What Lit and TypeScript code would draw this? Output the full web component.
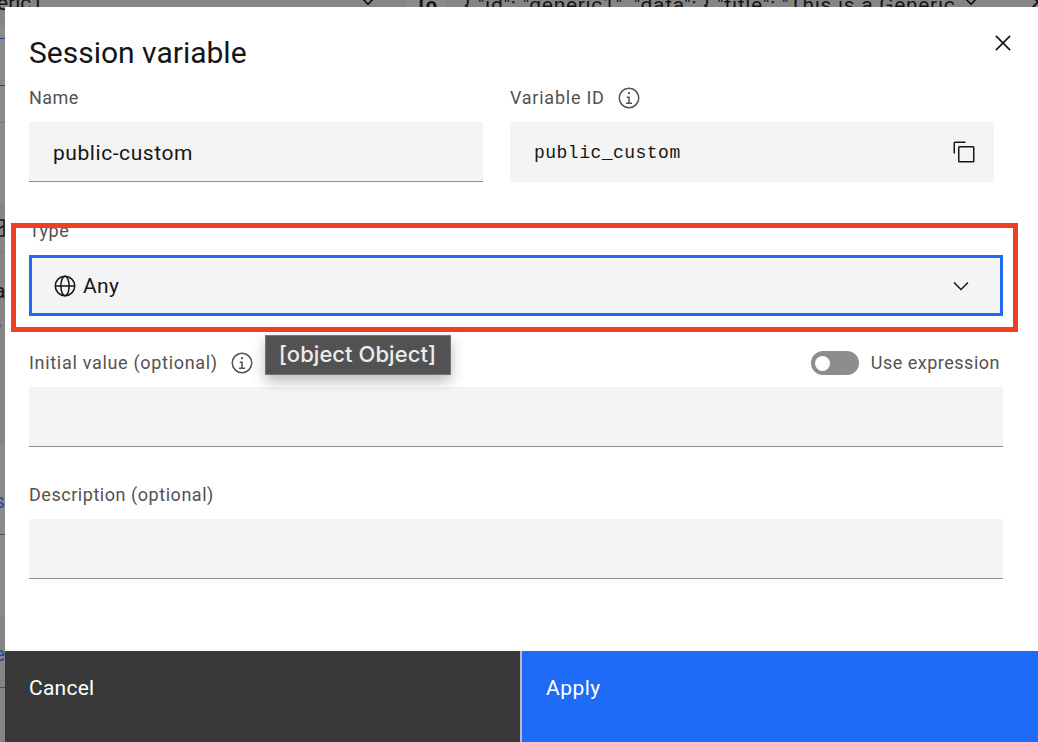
import { LitElement, html, css, svg } from "lit";
import { customElement } from "lit/decorators.js";

const infoIcon = html`<svg class="icon" width="24" height="24" viewBox="0 0 32 32" fill="currentColor">
  <path d="M17 22v-8h-4v2h2v6h-3v2h8v-2zM16 8a1.5 1.5 0 1 0 0 3 1.5 1.5 0 0 0 0-3z" />
  <path d="M16 30a14 14 0 1 1 14-14 14 14 0 0 1-14 14zm0-26a12 12 0 1 0 12 12A12 12 0 0 0 16 4z" />
</svg>`;

const chevronPath = svg`<path d="M8 11L3 6l.7-.7L8 9.6l4.3-4.3.7.7z" />`;

@customElement("page-backdrop")
class PageBackdrop extends LitElement {
  static styles = css`
    :host { display: block; height: 742px; background: #858585; color: #161616; font-family: Roboto, sans-serif; overflow: hidden; }
    .top { display: grid; grid-template-columns: 357px 48px 41px 514px 30px 1fr; height: 26px; white-space: pre; overflow: hidden; }
    .top > * { height: 26px; line-height: 28px; margin-top: -10px; font-size: 21px; }
    .top > .first { letter-spacing: 0; text-indent: -3px; line-height: 27px; }
    .top > .to { font-weight: 700; font-size: 20px; line-height: 30px; padding-left: 10px; background: #8b8b8b; }
    .top > .code { padding-left: 18px; letter-spacing: 0.69px; line-height: 30px; }
    .chev svg, .last svg { display: block; }
    .chev svg { margin-top: -1px; }
    .last { padding-left: 36px; }
    .rail { width: 5px; overflow: hidden; font-size: 21px; }
    .row { box-sizing: border-box; line-height: 22px; overflow: hidden; }
    .light { background: #8b8b8b; }
    .blue { border-bottom: 1px solid #1d4796; }
    .line { border-bottom: 1px solid #777; }
    .dark { border-bottom: 1px solid #505050; }
    .link { color: #2348a0; }
    .h12 { height: 13px; } .h47 { height: 47px; } .h37 { height: 37px; } .h81 { height: 81px; }
    .h14 { height: 15px; } .h34 { height: 34px; } .h192 { height: 192px; padding-top: 27px; }
    .h18 { height: 18px; } .h72 { height: 72px; padding-top: 27px; }
    .h81b { height: 81px; } .h72b { height: 72px; padding-top: 27px; }
    .pull { display: block; margin-left: -6px; }
    .tick { display: block; margin-top: 6px; margin-left: -3px; line-height: 22px; }
    .glyph { display: block; margin-left: -13px; }
  `;
  render() {
    return html`
      <div class="top">
        <span class="first">eric1</span>
        <span class="chev"><svg width="22" height="24" viewBox="0 0 16 16">${chevronPath}</svg></span>
        <span class="to">To</span>
        <span class="code">{ "id": "generic1", "data": { "title": "This is a Generic</span>
        <span class="chev"><svg width="22" height="24" viewBox="0 0 16 16">${chevronPath}</svg></span>
        <span class="last"><svg width="24" height="24" viewBox="0 0 32 32"><path d="M24 9.4L22.6 8 16 14.6 9.4 8 8 9.4l6.6 6.6L8 22.6 9.4 24l6.6-6.6 6.6 6.6 1.4-1.4-6.6-6.6z" /></svg></span>
      </div>
      <div class="rail">
        <div class="row light h12 blue"></div>
        <div class="row light h47 blue"></div>
        <div class="row light h37 line"></div>
        <div class="row light h81"></div>
        <div class="row h14"></div>
        <div class="row h34 line"><svg class="glyph" width="18" height="18" viewBox="0 0 18 18" fill="none" stroke="#161616" stroke-width="1.5"><path d="M1 1h16v16H1zM9 17c1-6 4-9 8-10" /></svg></div>
        <div class="row h192"><span class="pull">a</span><span class="tick">,</span></div>
        <div class="row light h18"></div>
        <div class="row light h72 dark link"><span class="pull">s</span></div>
        <div class="row light h81b"></div>
        <div class="row h72b dark link"><span class="pull">e</span></div>
      </div>
    `;
  }
}

@customElement("session-dialog")
class SessionDialog extends LitElement {
  static styles = css`
    :host { display: flex; flex-direction: column; background: #fff; color: #161616; font-family: Roboto, sans-serif; font-size: 21px; }
    .body { flex: 1; padding: 0 35px 0 24px; }
    header { display: flex; justify-content: space-between; height: 76px; }
    h2 { margin: 26px 0 0; font-size: 30px; line-height: 40px; font-weight: 400; letter-spacing: 0; }
    .close { margin: 24px -12px 0 0; width: 24px; height: 24px; }
    svg { display: block; flex: none; }
    .label { display: flex; align-items: center; gap: 12px; height: 30px; font-size: 18px; line-height: 20px; letter-spacing: 0.48px; color: #525252; }
    .label .grow { flex: 1; }
    .t-id { letter-spacing: 0.76px; }
    .t-initial { letter-spacing: 0.69px; }
    .t-desc { letter-spacing: 0.54px; }
    .t-use { letter-spacing: 0.5px; margin-right: 3px; }
    .pair { display: grid; grid-template-columns: 454px 484px; gap: 27px; }
    .box { display: flex; align-items: center; box-sizing: border-box; height: 60px; margin-top: 9px; padding: 0 24px; background: #f4f4f4; border-bottom: 1px solid #8d8d8d; letter-spacing: 0.24px; }
    .t-public { padding-top: 2px; letter-spacing: 0.56px; }
    .box.code { border: 0; justify-content: space-between; padding-right: 18px; font-family: "Liberation Mono", monospace; font-size: 18px; letter-spacing: 0.48px; }
    .t-code { padding-top: 2px; }
    .type { margin-top: 34px; }
    .box.select { height: 61px; margin-top: 9px; border: 3px solid #1f6af6; padding: 0 27px 0 21px; gap: 6px; }
    .box .any { flex: 1; letter-spacing: 0.4px; }
    .initial { margin-top: 32px; }
    .desc { margin-top: 33px; }
    .toggle { display: flex; align-items: center; box-sizing: border-box; width: 48px; height: 24px; padding: 0 4px; border-radius: 12px; background: #8d8d8d; }
    .knob { width: 15px; height: 15px; border-radius: 50%; background: #fff; }
    footer { display: grid; grid-template-columns: 515px 1fr; gap: 2px; height: 91px; background: linear-gradient(90deg, #393939 515px, #b9bcc4 515px); color: #fff; letter-spacing: 0.24px; }
    footer div { padding: 24px; line-height: 26px; }
    .cancel { background: #393939; }
    .apply { background: #1f6af6; letter-spacing: 0.45px; }
  `;
  render() {
    return html`
      <div class="body">
        <header>
          <h2>Session variable</h2>
          <svg class="close" viewBox="0 0 32 32" fill="currentColor" stroke="currentColor" stroke-width="0.5"><path d="M26 7.4L24.6 6 16 14.6 7.4 6 6 7.4l8.6 8.6L6 24.6 7.4 26l8.6-8.6 8.6 8.6 1.4-1.4-8.6-8.6z" /></svg>
        </header>
        <div class="pair">
          <div>
            <div class="label"><span>Name</span></div>
            <div class="box"><span class="t-public">public-custom</span></div>
          </div>
          <div>
            <div class="label"><span class="t-id">Variable ID</span>${infoIcon}</div>
            <div class="box code"><span class="t-code">public_custom</span>
              <svg width="24" height="24" viewBox="0 0 32 32" fill="currentColor"><path d="M28 10v18H10V10h18m0-2H10a2 2 0 0 0-2 2v18a2 2 0 0 0 2 2h18a2 2 0 0 0 2-2V10a2 2 0 0 0-2-2z" /><path d="M4 18H2V4a2 2 0 0 1 2-2h14v2H4z" /></svg>
            </div>
          </div>
        </div>
        <div class="label type"><span>Type</span></div>
        <div class="box select">
          <svg width="24" height="24" viewBox="0 0 32 32" fill="none" stroke="currentColor" stroke-width="2"><circle cx="16" cy="16" r="13" /><path d="M3 16h26" /><ellipse cx="16" cy="16" rx="5.5" ry="13" /></svg>
          <span class="any">Any</span>
          <svg width="24" height="24" viewBox="0 0 16 16" fill="currentColor">${chevronPath}</svg>
        </div>
        <div class="label initial"><span class="t-initial">Initial value (optional)</span>${infoIcon}<span class="grow"></span><span class="toggle"><span class="knob"></span></span><span class="t-use">Use expression</span></div>
        <div class="box"></div>
        <div class="label desc"><span class="t-desc">Description (optional)</span></div>
        <div class="box"></div>
      </div>
      <footer><div class="cancel">Cancel</div><div class="apply">Apply</div></footer>
    `;
  }
}

@customElement("app-root")
class AppRoot extends LitElement {
  static styles = css`
    :host { display: block; position: relative; width: 1038px; height: 742px; overflow: hidden; }
    .dialog { position: absolute; left: 5px; top: 7px; width: 1033px; height: 735px; }
    .marker { position: absolute; left: 11px; top: 223px; width: 1007px; height: 109px; box-sizing: border-box; border: 5px solid #ef4023; }
    .tip { position: absolute; left: 265px; top: 335px; box-sizing: border-box; width: 186px; height: 40px; border: 1px solid #747474; background: #525252; color: #ececec; font: 500 22px/37px Inter, sans-serif; letter-spacing: 0.05px; text-align: center; text-indent: -1px; white-space: nowrap; box-shadow: 0 6px 14px rgba(0, 0, 0, 0.28); }
  `;
  render() {
    return html`
      <page-backdrop></page-backdrop>
      <session-dialog class="dialog"></session-dialog>
      <div class="marker"></div>
      <div class="tip">[object Object]</div>
    `;
  }
}
